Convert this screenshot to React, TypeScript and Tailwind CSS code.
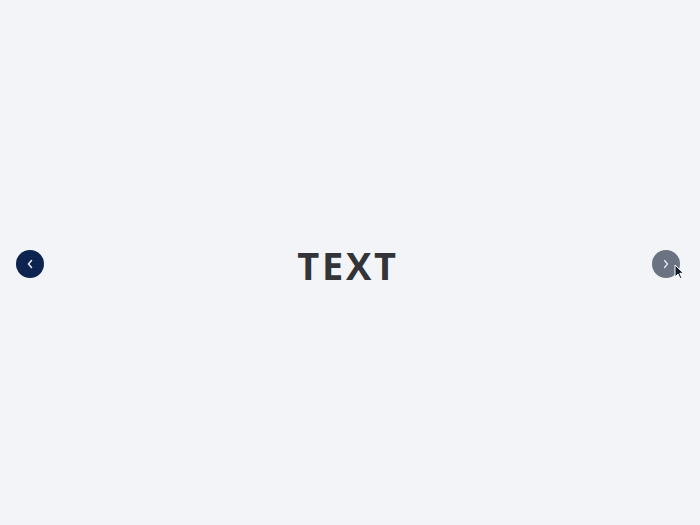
import React from "react";

export default function App() {
  return (
    <div className="w-[700px] h-[525px] bg-[#f3f4f8] flex items-center justify-between pl-4 pr-5 pt-[3px] relative" style={{ fontFamily: '"Open Sans", sans-serif' }}>
      <button className="w-7 h-7 rounded-full bg-[#0d2350] flex items-center justify-center">
        <svg width="8" height="10" viewBox="0 0 8 10" fill="none">
          <path d="M5.5 1.5 L2.5 5 L5.5 8.5" stroke="#e5e7eb" strokeWidth="1.6" strokeLinecap="round" strokeLinejoin="round" />
        </svg>
      </button>
      <div className="text-[38px] font-bold tracking-[0.07em] text-[#333438] leading-none mt-[1px]">TEXT</div>
      <div className="relative">
        <button className="w-7 h-7 rounded-full bg-[#6b7282] flex items-center justify-center">
          <svg width="8" height="10" viewBox="0 0 8 10" fill="none">
            <path d="M2.5 1.5 L5.5 5 L2.5 8.5" stroke="#e5e7eb" strokeWidth="1.3" strokeLinecap="round" strokeLinejoin="round" />
          </svg>
        </button>
        <svg className="absolute left-[22px] top-[14px]" width="10" height="16" viewBox="0 0 10 16">
          <path d="M1 1 L1 13 L4 10 L6 14.5 L7.8 13.7 L5.8 9.3 L9.5 9.3 Z" fill="#111827" stroke="#ffffff" strokeWidth="1" strokeLinejoin="round" />
        </svg>
      </div>
    </div>
  );
}
